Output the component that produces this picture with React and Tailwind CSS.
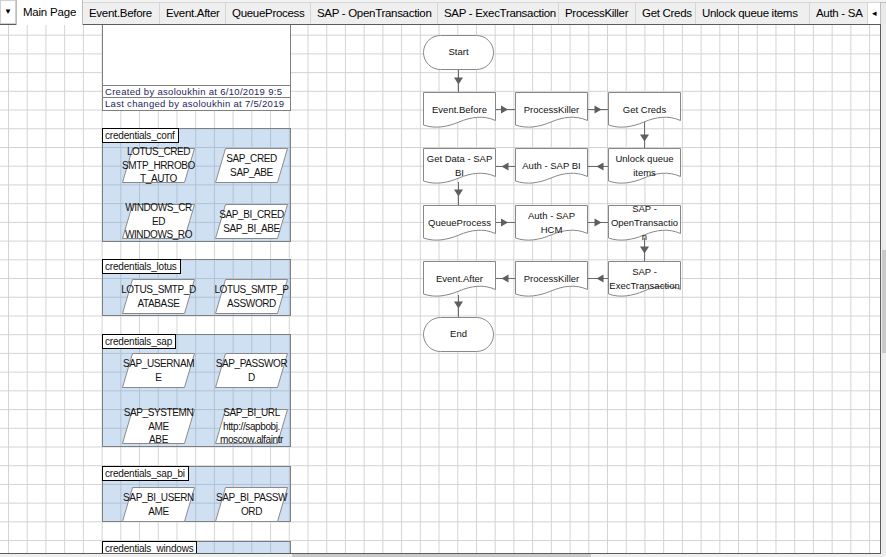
import React from "react";

const tabs = [
  { label: "Event.Before", w: "w-[77px]" },
  { label: "Event.After", w: "w-[66px]" },
  { label: "QueueProcess", w: "w-[85px]" },
  { label: "SAP - OpenTransaction", w: "w-[127px]" },
  { label: "SAP - ExecTransaction", w: "w-[121px]" },
  { label: "ProcessKiller", w: "w-[77px]" },
  { label: "Get Creds", w: "w-[60px]" },
  { label: "Unlock queue items", w: "w-[114px]" },
  { label: "Auth - SA", w: "w-[58px]" },
];

const Para = ({ lines }) => (
  <div className="relative h-[35px] w-[73px]">
    <svg className="absolute inset-0" width="73" height="35">
      <polygon points="10.5,0.5 72.5,0.5 62.5,34.5 0.5,34.5" fill="#fff" stroke="#8a8a8a" />
    </svg>
    <div className="absolute inset-0 flex flex-col items-center justify-center whitespace-nowrap text-center text-[10px] leading-[13.5px] tracking-[-0.4px] text-[#111]">
      {lines.map((l) => (
        <span key={l}>{l}</span>
      ))}
    </div>
  </div>
);

const Group = ({ label, items, h, mt }) => (
  <div className={`border border-[#7f7f7f] bg-[rgba(95,152,215,0.3)] ${h}`}>
    <div className="-ml-px -mt-px h-[15px] w-fit border border-black bg-white pl-[2px] pr-[3px] text-[10px] leading-[13px] tracking-[-0.2px] text-[#111]">
      {label}
    </div>
    <div className={`grid grid-cols-[73px_73px] gap-x-[20px] gap-y-[21px] pl-[19px] ${mt}`}>
      {items.map((it, i) => (
        <Para key={i} lines={it} />
      ))}
    </div>
  </div>
);

const Doc = ({ pos, lines }) => (
  <div className={`absolute h-[37px] w-[73px] ${pos}`}>
    <svg className="absolute inset-0" width="73" height="37">
      <path
        d="M0.5,0.5 H72.5 V28.5 C60,23 48,25 36,30 C24,35 12,37 0.5,33 Z"
        fill="#fff"
        stroke="#888"
      />
    </svg>
    <div className="absolute left-0 top-0 flex h-[35px] w-full flex-col items-center justify-center whitespace-nowrap text-center text-[9.5px] leading-[14px] text-[#111]">
      {lines.map((l) => (
        <span key={l}>{l}</span>
      ))}
    </div>
  </div>
);

const Terminal = ({ pos, label }) => (
  <div
    className={`absolute flex h-[35px] w-[71px] items-center justify-center rounded-full border border-[#888] bg-white text-[9.5px] text-[#111] ${pos}`}
  >
    {label}
  </div>
);

const down = (x, y) => `${x - 4.5},${y - 3.5} ${x + 4.5},${y - 3.5} ${x},${y + 3.5}`;
const right = (x, y) => `${x - 3.5},${y - 4} ${x - 3.5},${y + 4} ${x + 3.5},${y}`;
const left = (x, y) => `${x + 3.5},${y - 4} ${x + 3.5},${y + 4} ${x - 3.5},${y}`;

const Connectors = () => (
  <svg className="pointer-events-none absolute left-0 top-0" width="881" height="529">
    <g stroke="#6b6b6b" strokeWidth="1">
      <line x1="458.5" y1="45" x2="458.5" y2="67" />
      <line x1="495" y1="84.5" x2="515" y2="84.5" />
      <line x1="587" y1="84.5" x2="608" y2="84.5" />
      <line x1="644.5" y1="96" x2="644.5" y2="123" />
      <line x1="495" y1="141.5" x2="515" y2="141.5" />
      <line x1="587" y1="141.5" x2="608" y2="141.5" />
      <line x1="458.5" y1="157" x2="458.5" y2="180" />
      <line x1="495" y1="197.5" x2="515" y2="197.5" />
      <line x1="587" y1="197.5" x2="608" y2="197.5" />
      <line x1="644.5" y1="213" x2="644.5" y2="236" />
      <line x1="495" y1="253.5" x2="515" y2="253.5" />
      <line x1="587" y1="253.5" x2="608" y2="253.5" />
      <line x1="458.5" y1="270" x2="458.5" y2="292" />
    </g>
    <g fill="#5e5e5e">
      <polygon points={down(458.5, 56)} />
      <polygon points={right(504.5, 84.5)} />
      <polygon points={right(598, 84.5)} />
      <polygon points={down(644.5, 113)} />
      <polygon points={left(505, 141.5)} />
      <polygon points={left(600, 141.5)} />
      <polygon points={down(458.5, 168)} />
      <polygon points={right(504.5, 197.5)} />
      <polygon points={right(598, 197.5)} />
      <polygon points={down(644.5, 225)} />
      <polygon points={left(505, 253.5)} />
      <polygon points={left(600, 253.5)} />
      <polygon points={down(458.5, 280)} />
    </g>
  </svg>
);

export default function App() {
  return (
    <div className="h-[557px] w-[886px] overflow-hidden bg-[#f0f0f0] font-['Liberation_Sans',Arial,sans-serif]">
      {/* tab strip */}
      <div className="flex h-[24px] items-end bg-[#f3f3f3]">
        <div className="flex h-[24px] w-[16px] items-center justify-center border border-[#cfcfcf] bg-white text-[8px] text-black">
          ▼
        </div>
        <div className="relative z-10 -mb-px flex h-[25px] w-[67px] items-center justify-center border-x border-[#bdbdbd] bg-white text-[11.5px] tracking-[-0.2px] text-black">
          Main Page
        </div>
        {tabs.map((t) => (
          <div
            key={t.label}
            className={`flex h-[22px] shrink-0 items-center overflow-hidden whitespace-nowrap border-r border-t border-[#d6d6d6] bg-[#efefef] pl-[6px] text-[11.5px] tracking-[-0.3px] text-black ${t.w}`}
          >
            {t.label}
          </div>
        ))}
        <div className="flex h-[22px] w-[12px] items-center justify-center border-t border-[#d6d6d6] bg-white text-[9px] text-black">
          ◂
        </div>
        <div className="h-[22px] flex-1 border-l border-t border-[#bdbdbd] bg-[#e9e9e9]" />
      </div>

      <div className="flex">
        {/* canvas */}
        <div className="relative h-[530px] w-[881px] overflow-hidden border-y border-r border-[#5c5c5c] bg-white bg-[linear-gradient(to_right,#d3d3d3_1px,transparent_1px),linear-gradient(to_bottom,#d3d3d3_1px,transparent_1px)] bg-[size:18.73px_18.73px] bg-[position:8px_9.7px]">
          <div className="ml-[102px] w-[189px]">
            <div className="flex h-[86px] flex-col justify-end border-x border-b border-[#808080] bg-white text-[9.5px] tracking-[0.3px] text-[#261f5e]">
              <div className="h-[12px] overflow-hidden whitespace-nowrap border-t border-[#808080] px-[2px] leading-[11px]">
                Created by asoloukhin at 6/10/2019 9:5
              </div>
              <div className="h-[13px] overflow-hidden whitespace-nowrap border-t border-[#808080] px-[2px] leading-[12px]">
                Last changed by asoloukhin at 7/5/2019
              </div>
            </div>

            <div className="mt-[17px]">
              <Group
                label="credentials_conf"
                h="h-[114px]"
                mt="mt-[5px]"
                items={[
                  ["LOTUS_CRED", "SMTP_HRROBO", "T_AUTO"],
                  ["SAP_CRED", "SAP_ABE"],
                  ["WINDOWS_CR", "ED", "WINDOWS_RO"],
                  ["SAP_BI_CRED", "SAP_BI_ABE"],
                ]}
              />
            </div>
            <div className="mt-[17px]">
              <Group
                label="credentials_lotus"
                h="h-[57px]"
                mt="mt-[5px]"
                items={[
                  ["LOTUS_SMTP_D", "ATABASE"],
                  ["LOTUS_SMTP_P", "ASSWORD"],
                ]}
              />
            </div>
            <div className="mt-[18px]">
              <Group
                label="credentials_sap"
                h="h-[113px]"
                mt="mt-[4px]"
                items={[
                  ["SAP_USERNAM", "E"],
                  ["SAP_PASSWOR", "D"],
                  ["SAP_SYSTEMN", "AME", "ABE"],
                  ["SAP_BI_URL", "http://sapbobj.", "moscow.alfaintr"],
                ]}
              />
            </div>
            <div className="mt-[19px]">
              <Group
                label="credentials_sap_bi"
                h="h-[56px]"
                mt="mt-[6px]"
                items={[
                  ["SAP_BI_USERN", "AME"],
                  ["SAP_BI_PASSW", "ORD"],
                ]}
              />
            </div>
            <div className="mt-[19px]">
              <Group label="credentials_windows" h="h-[60px]" mt="mt-[5px]" items={[]} />
            </div>
          </div>

          {/* flowchart */}
          <Connectors />
          <Terminal pos="left-[423px] top-[10px]" label="Start" />
          <Doc pos="left-[423px] top-[67px]" lines={["Event.Before"]} />
          <Doc pos="left-[515px] top-[67px]" lines={["ProcessKiller"]} />
          <Doc pos="left-[608px] top-[67px]" lines={["Get Creds"]} />
          <Doc pos="left-[423px] top-[123px]" lines={["Get Data - SAP", "BI"]} />
          <Doc pos="left-[515px] top-[123px]" lines={["Auth - SAP BI"]} />
          <Doc pos="left-[608px] top-[123px]" lines={["Unlock queue", "items"]} />
          <Doc pos="left-[423px] top-[180px]" lines={["QueueProcess"]} />
          <Doc pos="left-[515px] top-[180px]" lines={["Auth - SAP", "HCM"]} />
          <Doc pos="left-[608px] top-[180px]" lines={["SAP -", "OpenTransactio", "n"]} />
          <Doc pos="left-[423px] top-[236px]" lines={["Event.After"]} />
          <Doc pos="left-[515px] top-[236px]" lines={["ProcessKiller"]} />
          <Doc pos="left-[608px] top-[236px]" lines={["SAP -", "ExecTransaction"]} />
          <Terminal pos="left-[423px] top-[292px]" label="End" />
        </div>

        {/* vertical scrollbar */}
        <div className="relative h-[530px] w-[5px] bg-[#ececec]">
          <div className="absolute left-[1px] top-[226px] h-[103px] w-[4px] bg-[#c9c9c9]" />
        </div>
      </div>

      {/* horizontal scrollbar */}
      <div className="relative h-[3px] bg-[#efefef]">
        <div className="absolute left-[292px] top-0 h-[3px] w-[299px] bg-[#c9c9c9]" />
      </div>
    </div>
  );
}
